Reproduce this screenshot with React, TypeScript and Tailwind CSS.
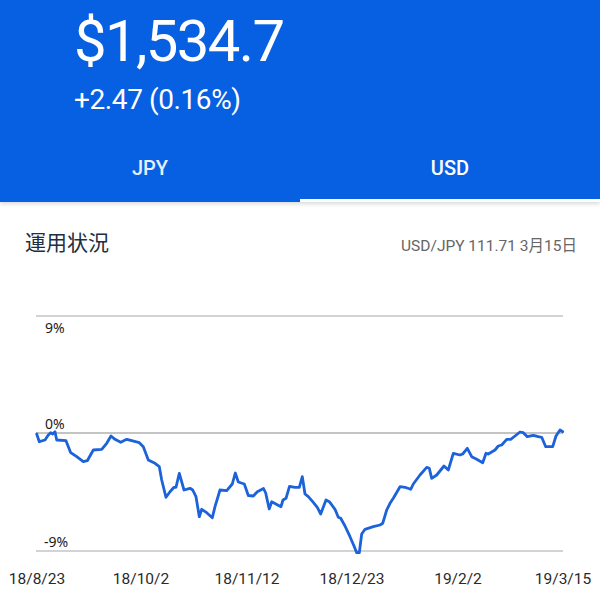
import React from "react";

const points =
  "36.7,434 39.3,441.7 45,440 48.3,435 50.7,432.7 52.7,434 55,431.7 56.7,440 66,440.7 70.7,452.7 76.7,456.7 83.3,461.7 87.3,460.7 93.3,450 101.7,449.3 106.7,443.3 111,436 115,439.3 120.7,442.3 126.7,439.3 131.7,440.7 139.3,442.7 143.3,446.7 148.3,460 155,463.3 159.3,466.7 161.7,480 166,497.3 170,491.7 174,487.3 176,487.3 179.3,473.3 184,490 190,488.3 192.7,490 196,496.7 199.3,516.7 201.7,509.3 206.7,512.7 212.3,517.7 215,506.7 220,490 226.7,490.7 232.3,484 235.3,473 238.3,482 244.3,484 248.3,495.5 253.3,496 257.3,491.7 263.5,488.5 265.7,493 269.2,509 271.7,501.7 281,506.7 283,500 286,498.3 289.5,486.3 295,487.3 299.3,487.3 302.3,476.7 305,494 308.3,496.7 312.7,501.7 317.3,507.3 320.7,514 326,500 329.3,501.7 335,509.3 338.3,517.3 340.7,518.3 345,526 350,536.7 354,546 356.7,552.7 359.3,552.7 361.7,534 365,529.3 373.3,526.7 380,525 382.7,523.3 386.7,510 390,503.3 393.3,498.3 400,486.7 405,487.3 410.7,489.3 413.3,484 420,475 426.7,467.3 429.3,468.3 431.7,478.3 436.7,475 444,466 448.3,470 453.3,453.3 460,455 462.7,454 467.3,448.3 471.7,456.7 476.7,459.3 482.7,462.7 486,453.3 488.3,454 495,450 498.3,446 501.7,445 506.7,439.3 510.7,439.3 515,436 520,432 523.3,432.7 527.3,436.7 533.3,435.3 538.3,436.7 541.7,437.3 545.7,446.7 552.7,446.7 556,436 560,430 562.7,431.7";

const dates = [
  { x: 37, label: "18/8/23" },
  { x: 141, label: "18/10/2" },
  { x: 247, label: "18/11/12" },
  { x: 352, label: "18/12/23" },
  { x: 458, label: "19/2/2" },
  { x: 563, label: "19/3/15" },
];

export default function App() {
  return (
    <div
      className="w-[600px] h-[597px] bg-white overflow-hidden"
      style={{ fontFamily: "Roboto, 'Noto Sans CJK JP', sans-serif" }}
    >
      <header className="relative bg-[#0760e2] text-white h-[202px] shadow-[0_2px_4px_rgba(0,0,0,0.15)]">
        <div className="pl-[74px] pt-[6px]">
          <div className="text-[58px] leading-[70px] tracking-[-1.6px]">
            $1,534.7
          </div>
          <div className="text-[28px] leading-[32px] mt-[8px] tracking-[-0.4px]">
            +2.47 (0.16%)
          </div>
        </div>
        <div className="absolute bottom-0 left-0 right-0 flex h-[66px]">
          <button className="flex-1 flex items-center justify-center text-[20px] font-medium text-white/90 pb-[3px]">
            JPY
          </button>
          <button className="flex-1 flex items-center justify-center text-[20px] font-medium border-b-[3px] border-white">
            USD
          </button>
        </div>
      </header>

      <section className="flex items-start justify-between px-[25px] pt-[27px]">
        <h2 className="text-[21px] leading-[28px] font-normal text-[#1d2f43]">
          運用状況
        </h2>
        <span className="text-[15.5px] leading-[20px] text-[#666] mt-[7px] mr-[-2px]">
          USD/JPY 111.71 3月15日
        </span>
      </section>

      <svg
        width="600"
        height="307"
        viewBox="0 290 600 307"
        className="block mt-[33px]"
      >
        <line x1="36" y1="316" x2="563" y2="316" stroke="#c4c4c4" strokeWidth="1.5" />
        <line x1="36" y1="433" x2="563" y2="433" stroke="#b0b0b0" strokeWidth="1.5" />
        <line x1="36" y1="551" x2="563" y2="551" stroke="#c4c4c4" strokeWidth="1.5" />
        <g fontFamily="'Noto Sans', sans-serif" fontSize="14" fill="#1a1a1a">
          <text x="45" y="333">9%</text>
          <text x="45" y="429">0%</text>
          <text x="44" y="547">-9%</text>
        </g>
        <polyline
          points={points}
          fill="none"
          stroke="#1c62d9"
          strokeWidth="2.8"
          strokeLinejoin="round"
          strokeLinecap="round"
        />
        <g fontFamily="Roboto, sans-serif" fontSize="15.5" fill="#2a2a2a" textAnchor="middle">
          {dates.map((d) => (
            <text key={d.label} x={d.x} y="584">
              {d.label}
            </text>
          ))}
        </g>
      </svg>
    </div>
  );
}
